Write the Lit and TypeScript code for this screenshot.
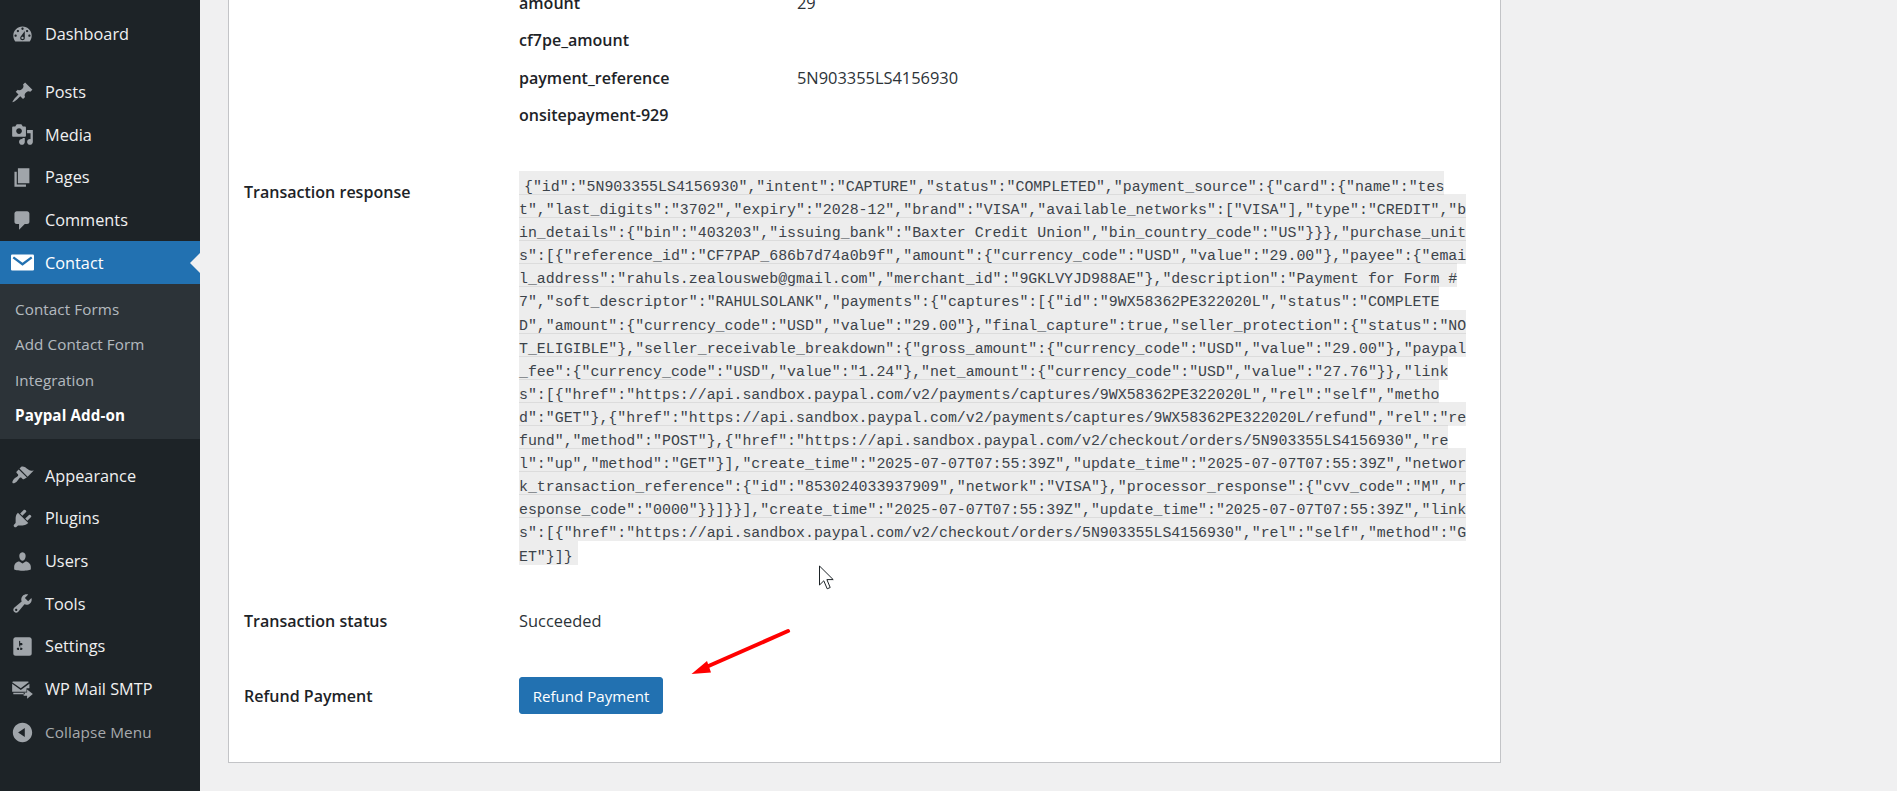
import { LitElement, html, css, svg } from "lit";
import { customElement } from "lit/decorators.js";

const ICONS: Record<string, any> = {
  dashboard: svg`<path fill-rule="evenodd" d="M3.76 16h12.48c1.1-1.37 1.76-3.11 1.76-5 0-4.42-3.58-8-8-8s-8 3.58-8 8c0 1.89.66 3.63 1.76 5zM10 4c.55 0 1 .45 1 1s-.45 1-1 1-1-.45-1-1 .45-1 1-1zM6 6c.55 0 1 .45 1 1s-.45 1-1 1-1-.45-1-1 .45-1 1-1zm8 0c.55 0 1 .45 1 1s-.45 1-1 1-1-.45-1-1 .45-1 1-1zm-5.37 5.55L12 7v6c0 1.1-.9 2-2 2s-2-.9-2-2c0-.57.24-1.08.63-1.45zM4 10c.55 0 1 .45 1 1s-.45 1-1 1-1-.45-1-1 .45-1 1-1zm12 0c.55 0 1 .45 1 1s-.45 1-1 1-1-.45-1-1 .45-1 1-1zm-5 3c0-.55-.45-1-1-1s-1 .45-1 1 .45 1 1 1 1-.45 1-1z"/>`,
  posts: svg`<path d="M10.44 3.02l1.82-1.82 6.36 6.35-1.83 1.82c-1.05-.68-2.48-.57-3.41.36l-.75.75c-.92.93-1.04 2.35-.35 3.41l-1.83 1.82-2.41-2.41-2.8 2.79c-.42.42-3.38 2.71-3.8 2.29s1.86-3.39 2.28-3.81l2.79-2.79L4.1 9.36l1.83-1.82c1.05.69 2.48.57 3.4-.36l.75-.75c.93-.92 1.05-2.35.36-3.41z"/>`,
  media: svg`<path fill-rule="evenodd" d="M13 11V4c0-.55-.45-1-1-1h-1.67L9 1H5L3.67 3H2c-.55 0-1 .45-1 1v7c0 .55.45 1 1 1h10c.55 0 1-.45 1-1zM7 4.5c1.38 0 2.5 1.12 2.5 2.5S8.38 9.5 7 9.5 4.5 8.38 4.5 7 5.62 4.5 7 4.5zM14 6h5v10.5c0 1.38-1.12 2.5-2.5 2.5S14 17.88 14 16.5s1.12-2.5 2.5-2.5c.17 0 .34.02.5.05V9h-3V6zm-4 8.05V13h2v3.5c0 1.38-1.12 2.5-2.5 2.5S7 17.88 7 16.5 8.12 14 9.5 14c.17 0 .34.02.5.05z"/>`,
  pages: svg`<path d="M6 15V2h10v13H6zm-1 1h8v2H3V5h2v11z"/>`,
  comments: svg`<path d="M5 2h9c1.1 0 2 .9 2 2v7c0 1.1-.9 2-2 2h-2l-5 5v-5H5c-1.1 0-2-.9-2-2V4c0-1.1.9-2 2-2z"/>`,
  mail: svg`<rect x="0" y="3" width="20" height="14" rx="1" fill="#fff"/><path d="M2 5.5l8 6 8-6" fill="none" stroke="#2271b1" stroke-width="2"/>`,
  appearance: svg`<path d="M14.48 11.06L7.41 3.99l1.5-1.5c.5-.56 2.3-.47 3.51.32 1.21.8 1.43 1.28 2.91 2.1 1.18.64 2.45 1.26 4.45.85zm-.71.71L6.7 4.7 4.93 6.47c-.39.39-.39 1.02 0 1.41l1.06 1.06c.39.39.39 1.03 0 1.42-.6.6-1.43 1.11-2.21 1.69-.35.26-.7.53-1.01.84-1.34 1.34-2 3.06-1.37 3.69.63.62 2.35-.03 3.7-1.38.31-.31.58-.66.84-1.01.58-.78 1.09-1.61 1.69-2.21.39-.39 1.02-.39 1.41 0l1.06 1.06c.39.39 1.02.39 1.41 0z"/>`,
  plugins: svg`<path d="M13.11 4.36L9.87 7.6 8 5.73l3.24-3.24c.35-.34 1.05-.2 1.56.32.52.51.66 1.21.31 1.55zm-8 1.77l.91-1.12 9.01 9.01-1.19.84c-.71.71-2.63 1.16-3.82 1.16H6.14L4.9 17.26c-.59.59-1.54.59-2.12 0-.59-.58-.59-1.53 0-2.12l1.24-1.24v-3.88c0-1.13.4-3.19 1.09-3.89zm7.26 3.97l3.24-3.24c.34-.35 1.04-.21 1.55.31.52.51.66 1.21.31 1.55l-3.24 3.25z"/>`,
  users: svg`<path d="M10 9.25c-2.27 0-2.73-3.44-2.73-3.44C7 4.02 7.82 2 9.97 2c2.16 0 2.98 2.02 2.71 3.81 0 0-.41 3.44-2.68 3.44zm0 2.57L12.72 10c2.39 0 4.52 2.33 4.52 4.53v2.49s-3.65 1.13-7.24 1.13c-3.65 0-7.24-1.13-7.24-1.13v-2.49c0-2.25 1.94-4.48 4.47-4.48z"/>`,
  tools: svg`<path fill-rule="evenodd" d="M16.68 9.77c-1.34 1.34-3.3 1.67-4.95.99l-5.41 6.52c-.99.99-2.59.99-3.58 0s-.99-2.59 0-3.57l6.52-5.42c-.68-1.65-.35-3.61.99-4.95 1.28-1.28 3.12-1.62 4.72-1.06l-2.89 2.89 2.82 2.82 2.86-2.87c.53 1.58.18 3.39-1.08 4.65zM3.81 16.21c.4.39 1.04.39 1.43 0 .4-.4.4-1.04 0-1.43-.39-.4-1.03-.4-1.43 0-.39.39-.39 1.03 0 1.43z"/>`,
  settings: svg`<path fill-rule="evenodd" d="M18 16V4c0-1.1-.9-2-2-2H4c-1.1 0-2 .9-2 2v12c0 1.1.9 2 2 2h12c1.1 0 2-.9 2-2zM8 11h1c.55 0 1 .45 1 1s-.45 1-1 1H8v1.5c0 .28-.22.5-.5.5s-.5-.22-.5-.5V13H6c-.55 0-1-.45-1-1s.45-1 1-1h1V5.5c0-.28.22-.5.5-.5s.5.22.5.5V7h1c.55 0 1 .45 1 1s-.45 1-1 1h-1v5.5c0 .28-.22.5-.5.5s-.5-.22-.5-.5V9z"/>`,
  smtp: svg`<path d="M2 3h12.5c.5 0 .9.2 1.1.5L8.5 9 1 3.6C1.2 3.2 1.5 3 2 3zM1 5l7.5 5.5L16 5v4h-2.5v3H1V5z"/><path d="M2 12.8h10v1.4H2zM14 10v2.5h-3v3h3V18l5-4z"/>`,
  collapse: svg`<path fill-rule="evenodd" d="M10 1.6c4.64 0 8.4 3.76 8.4 8.4s-3.76 8.4-8.4 8.4S1.6 14.64 1.6 10 5.36 1.6 10 1.6zm2 12.3V6.1L6.2 10z"/>`,
};

const TOP_ITEMS = [
  ["posts", "Posts"],
  ["media", "Media"],
  ["pages", "Pages"],
  ["comments", "Comments"],
];
const BOTTOM_ITEMS = [
  ["appearance", "Appearance"],
  ["plugins", "Plugins"],
  ["users", "Users"],
  ["tools", "Tools"],
  ["settings", "Settings"],
  ["smtp", "WP Mail SMTP"],
];
const SUB_ITEMS = ["Contact Forms", "Add Contact Form", "Integration"];

const FIELDS = [
  ["amount", "29"],
  ["cf7pe_amount", ""],
  ["payment_reference", "5N903355LS4156930"],
  ["onsitepayment-929", ""],
];

const RESPONSE = [
  `{"id":"5N903355LS4156930","intent":"CAPTURE","status":"COMPLETED","payment_source":{"card":{"name":"tes`,
  `t","last_digits":"3702","expiry":"2028-12","brand":"VISA","available_networks":["VISA"],"type":"CREDIT","b`,
  `in_details":{"bin":"403203","issuing_bank":"Baxter Credit Union","bin_country_code":"US"}}},"purchase_unit`,
  `s":[{"reference_id":"CF7PAP_686b7d74a0b9f","amount":{"currency_code":"USD","value":"29.00"},"payee":{"emai`,
  `l_address":"rahuls.zealousweb@gmail.com","merchant_id":"9GKLVYJD988AE"},"description":"Payment for Form #`,
  `7","soft_descriptor":"RAHULSOLANK","payments":{"captures":[{"id":"9WX58362PE322020L","status":"COMPLETE`,
  `D","amount":{"currency_code":"USD","value":"29.00"},"final_capture":true,"seller_protection":{"status":"NO`,
  `T_ELIGIBLE"},"seller_receivable_breakdown":{"gross_amount":{"currency_code":"USD","value":"29.00"},"paypal`,
  `_fee":{"currency_code":"USD","value":"1.24"},"net_amount":{"currency_code":"USD","value":"27.76"}},"link`,
  `s":[{"href":"https://api.sandbox.paypal.com/v2/payments/captures/9WX58362PE322020L","rel":"self","metho`,
  `d":"GET"},{"href":"https://api.sandbox.paypal.com/v2/payments/captures/9WX58362PE322020L/refund","rel":"re`,
  `fund","method":"POST"},{"href":"https://api.sandbox.paypal.com/v2/checkout/orders/5N903355LS4156930","re`,
  `l":"up","method":"GET"}],"create_time":"2025-07-07T07:55:39Z","update_time":"2025-07-07T07:55:39Z","networ`,
  `k_transaction_reference":{"id":"853024033937909","network":"VISA"},"processor_response":{"cvv_code":"M","r`,
  `esponse_code":"0000"}}]}}],"create_time":"2025-07-07T07:55:39Z","update_time":"2025-07-07T07:55:39Z","link`,
  `s":[{"href":"https://api.sandbox.paypal.com/v2/checkout/orders/5N903355LS4156930","rel":"self","method":"G`,
  `ET"}]}`,
];

@customElement("app-root")
export class AppRoot extends LitElement {
  static styles = css`
    :host {
      display: flex;
      position: relative;
      width: 100%;
      height: 791px;
      overflow: hidden;
      background: #f0f0f1;
      font-family: "Open Sans", "Liberation Sans", sans-serif;
      color: #1d2327;
    }
    .side {
      width: 200px;
      flex: none;
      background: #1d2327;
      padding-top: 13px;
      box-sizing: border-box;
      font-size: 16.3px;
    }
    .item {
      position: relative;
      display: flex;
      align-items: center;
      height: 42.7px;
      color: #f0f0f1;
    }
    .item svg {
      width: 23px;
      height: 23px;
      margin-left: 11px;
      margin-right: 11px;
      flex: none;
      fill: #a0a5aa;
    }
    .first { margin-bottom: 15px; }
    .current {
      background: #2271b1;
      color: #fff;
    }
    .current svg { fill: #fff; }
    .current::after {
      content: "";
      position: absolute;
      right: 0;
      top: 50%;
      margin-top: -10px;
      border: 10px solid transparent;
      border-right-color: #f0f0f1;
      border-left-width: 0;
    }
    .sub {
      background: #2c3338;
      padding: 7.4px 0 6px;
      margin-bottom: 15.6px;
      font-size: 15.2px;
      letter-spacing: 0.1px;
    }
    .sub div {
      height: 35.3px;
      display: flex;
      align-items: center;
      padding-left: 15px;
      color: rgba(240, 246, 252, 0.7);
    }
    .sub .on {
      color: #fff;
      font-weight: 700;
    }
    .collapse {
      margin-top: 0.5px;
      font-size: 15.3px;
      letter-spacing: 0.1px;
      color: #a7aaad;
    }
    .main {
      flex: 1;
      min-width: 0;
      padding: 0 396px 0 28px;
    }
    .card {
      margin-top: -20px;
      height: 783px;
      box-sizing: border-box;
      background: #fff;
      border: 1px solid #c3c4c7;
      padding: 3px 0 0 15px;
      font-size: 16.4px;
      color: #2c3338;
    }
    .row {
      display: grid;
      grid-template-columns: 275px 1fr;
    }
    .label {
      font-size: 16.05px;
      font-weight: 600;
      color: #1d2327;
      line-height: 24px;
    }
    .fields {
      grid-column: 2;
      margin-bottom: 38px;
    }
    .field {
      display: grid;
      grid-template-columns: 278px 1fr;
      align-items: center;
      height: 37.5px;
    }
    .resp .label { padding-top: 8px; }
    .code {
      font-family: "Liberation Mono", monospace;
      font-size: 14.9px;
      line-height: 23.1px;
      white-space: pre;
      color: #3c434a;
      padding-top: 5.5px;
      margin-top: -1.5px;
    }
    code {
      font: inherit;
      background: rgba(0, 0, 0, 0.07);
      padding: 8px 5px 0;
      -webkit-box-decoration-break: slice;
      box-decoration-break: slice;
    }
    .status {
      margin-top: 40px;
      line-height: 24px;
    }
    .refund {
      margin-top: 44.5px;
      align-items: center;
    }
    button {
      width: 144px;
      height: 37px;
      padding: 0;
      border: 1px solid #2271b1;
      border-radius: 3px;
      background: #2271b1;
      color: #fff;
      font: inherit;
      font-size: 15.1px;
    }
    .overlay {
      position: absolute;
      left: 0;
      top: 0;
      pointer-events: none;
    }
  `;

  render() {
    const icon = (n: string) => html`<svg viewBox="0 0 20 20">${ICONS[n]}</svg>`;
    const item = (n: string[], cls = "") =>
      html`<div class="item ${cls}">${icon(n[0])}<span>${n[1]}</span></div>`;
    return html`
      <nav class="side">
        ${item(["dashboard", "Dashboard"], "first")}
        ${TOP_ITEMS.map((i) => item(i))}
        ${item(["mail", "Contact"], "current")}
        <div class="sub">
          ${SUB_ITEMS.map((s) => html`<div>${s}</div>`)}
          <div class="on">Paypal Add-on</div>
        </div>
        ${BOTTOM_ITEMS.map((i) => item(i))}
        ${item(["collapse", "Collapse Menu"], "collapse")}
      </nav>
      <main class="main">
        <section class="card">
          <div class="row">
            <div class="fields">
              ${FIELDS.map(
                (f) => html`<div class="field"><div class="label">${f[0]}</div><div>${f[1]}</div></div>`
              )}
            </div>
          </div>
          <div class="row resp">
            <div class="label">Transaction response</div>
            <div class="code"><code>${RESPONSE.map(
              (l, i) => html`${l}${i < RESPONSE.length - 1 ? html`<br />` : ""}`
            )}</code></div>
          </div>
          <div class="row status">
            <div class="label">Transaction status</div>
            <div>Succeeded</div>
          </div>
          <div class="row refund">
            <div class="label">Refund Payment</div>
            <div><button>Refund Payment</button></div>
          </div>
        </section>
      </main>
      <svg class="overlay" width="1897" height="791" viewBox="0 0 1897 791">
        <path d="M819.5 566v19l4.3-4.2 3.4 8 3-1.3-3.3-7.9 6.3 0z" fill="#fff" stroke="#1d2327" stroke-width="1"/>
        <path d="M788 631L704 668" stroke="#ff0000" stroke-width="4" stroke-linecap="round" fill="none"/>
        <path d="M691.5 674L707 661L711 672.5z" fill="#ff0000"/>
      </svg>
    `;
  }
}
